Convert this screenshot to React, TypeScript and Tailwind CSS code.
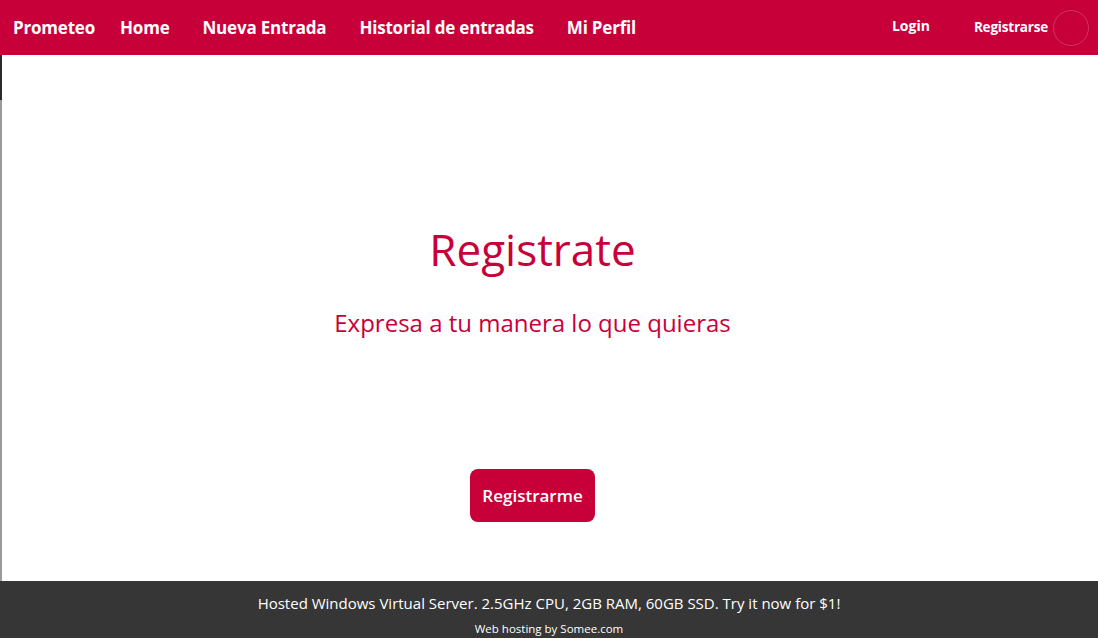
import React from 'react';

const navLinks = ['Home', 'Nueva Entrada', 'Historial de entradas', 'Mi Perfil'];

export default function App() {
  return (
    <div
      className="flex h-[638px] w-[1098px] flex-col overflow-hidden bg-white"
      style={{ fontFamily: '"Open Sans", "Noto Sans", sans-serif' }}
    >
      {/* Navbar */}
      <nav className="flex h-[55px] shrink-0 items-center bg-[#c8003a] pl-[13px] pr-[9px] text-white">
        <span className="text-[17px] font-bold tracking-[-0.2px]">Prometeo</span>
        <ul className="ml-[25px] flex gap-[33px]">
          {navLinks.map((l) => (
            <li key={l} className="text-[17px] font-bold tracking-[-0.2px]">
              {l}
            </li>
          ))}
        </ul>
        <div className="ml-auto flex items-center">
          <span className="mr-[44px] -mt-[5px] text-[14px] font-bold">Login</span>
          <span className="text-[13.5px] font-bold tracking-[-0.2px]">Registrarse</span>
          <span className="ml-[5px] h-[36px] w-[36px] rounded-full border border-white/20" />
        </div>
      </nav>

      {/* Body */}
      <div className="flex flex-1">
        <div className="flex w-[2px] flex-col bg-[#9a9a9a]">
          <div className="h-[45px] bg-[#2a2a2a]" />
        </div>
        <main className="flex flex-1 flex-col items-center pr-[35px] text-[#c8003a]">
          <h1 className="mt-[168px] text-[44px] leading-[52px]">Registrate</h1>
          <p className="mt-[32px] text-[24px] leading-[32px]">Expresa a tu manera lo que quieras</p>
          <button className="mt-[130px] h-[53px] w-[125px] rounded-[8px] bg-[#c8003a] text-[17px] font-semibold text-white">
            Registrarme
          </button>
        </main>
      </div>

      {/* Footer */}
      <footer className="flex h-[57px] shrink-0 flex-col items-center bg-[#363636] text-white">
        <p className="mt-[11px] text-[15px] leading-[22px]">
          Hosted Windows Virtual Server. 2.5GHz CPU, 2GB RAM, 60GB SSD. Try it now for $1!
        </p>
        <p className="mt-[8px] text-[11.5px] leading-[14px]">Web hosting by Somee.com</p>
      </footer>
    </div>
  );
}
